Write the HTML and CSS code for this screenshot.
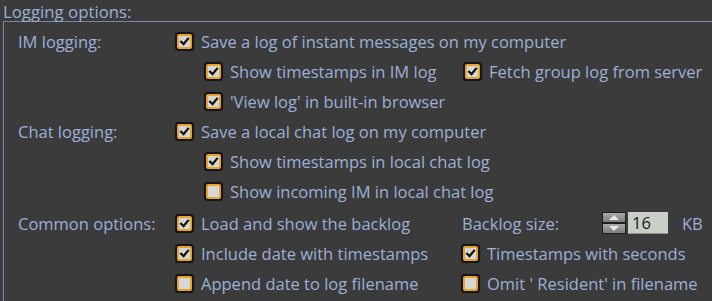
FILE: index.html
```html
<!DOCTYPE html>
<html>
<head>
<meta charset="utf-8">
<link rel="stylesheet" href="styles.css">
</head>
<body>
<div class="title">Logging options:</div>
<div class="box">
  <div class="row">
    <div class="lbl">IM logging:</div>
    <div class="opt"><span class="cb on"><svg viewBox="0 0 12 12"><path d="M2.3 6.2 L5 8.8 L9.8 3"/></svg></span>Save a log of instant messages on my computer</div>
  </div>
  <div class="row sub">
    <div class="opt w1"><span class="cb on"><svg viewBox="0 0 12 12"><path d="M2.3 6.2 L5 8.8 L9.8 3"/></svg></span>Show timestamps in IM log</div>
    <div class="opt"><span class="cb on"><svg viewBox="0 0 12 12"><path d="M2.3 6.2 L5 8.8 L9.8 3"/></svg></span>Fetch group log from server</div>
  </div>
  <div class="row sub">
    <div class="opt"><span class="cb on"><svg viewBox="0 0 12 12"><path d="M2.3 6.2 L5 8.8 L9.8 3"/></svg></span>'View log' in built-in browser</div>
  </div>
  <div class="row">
    <div class="lbl">Chat logging:</div>
    <div class="opt"><span class="cb on"><svg viewBox="0 0 12 12"><path d="M2.3 6.2 L5 8.8 L9.8 3"/></svg></span>Save a local chat log on my computer</div>
  </div>
  <div class="row sub">
    <div class="opt"><span class="cb on"><svg viewBox="0 0 12 12"><path d="M2.3 6.2 L5 8.8 L9.8 3"/></svg></span>Show timestamps in local chat log</div>
  </div>
  <div class="row sub">
    <div class="opt"><span class="cb"></span>Show incoming IM in local chat log</div>
  </div>
  <div class="row gap">
    <div class="lbl">Common options:</div>
    <div class="opt w2"><span class="cb on"><svg viewBox="0 0 12 12"><path d="M2.3 6.2 L5 8.8 L9.8 3"/></svg></span>Load and show the backlog</div>
    <div class="backlog">
      <span class="bl-label">Backlog size:</span>
      <span class="spin"><span class="btn up"></span><span class="btn down"></span></span>
      <span class="num">16</span>
      <span class="kb">KB</span>
    </div>
  </div>
  <div class="row ind">
    <div class="opt w2"><span class="cb on"><svg viewBox="0 0 12 12"><path d="M2.3 6.2 L5 8.8 L9.8 3"/></svg></span>Include date with timestamps</div>
    <div class="opt"><span class="cb on"><svg viewBox="0 0 12 12"><path d="M2.3 6.2 L5 8.8 L9.8 3"/></svg></span>Timestamps with seconds</div>
  </div>
  <div class="row ind">
    <div class="opt w2"><span class="cb"></span>Append date to log filename</div>
    <div class="opt"><span class="cb"></span>Omit ' Resident' in filename</div>
  </div>
</div>
</body>
</html>
```

FILE: styles.css
```css
html, body {
  margin: 0;
  padding: 0;
  background: #3b3b3b;
}
body {
  width: 712px;
  height: 301px;
  overflow: hidden;
  font-family: "Open Sans", "Noto Sans", sans-serif;
  font-size: 16.5px;
  color: #9cb0d8;
}
.title {
  height: 21px;
  line-height: 23px;
  padding-left: 3px;
  font-size: 16.8px;
  overflow: visible;
}
.box {
  box-sizing: border-box;
  margin-left: 3px;
  border-top: 1px solid #7788a6;
  border-left: 1px solid #7788a6;
  padding-top: 4px;
  padding-left: 14px;
  height: 280px;
}
.row {
  display: flex;
  align-items: center;
  height: 30px;
  white-space: nowrap;
}
.row.sub {
  padding-left: 187px;
}
.row.ind {
  padding-left: 158px;
}
.row.gap {
  margin-top: 2px;
}
.lbl {
  width: 158px;
  flex: none;
}
.opt {
  display: flex;
  align-items: center;
}
.w1 {
  width: 259px;
  flex: none;
}
.w2 {
  width: 286px;
  flex: none;
}
.cb {
  box-sizing: border-box;
  width: 15px;
  height: 15px;
  border: 2px solid #e9a32a;
  border-radius: 2px;
  background: #d6d6d4;
  box-shadow: 0 0 1px 1.5px #141414;
  margin-left: 1px;
  margin-right: 9px;
  display: flex;
  align-items: center;
  justify-content: center;
  flex: none;
}
.cb svg {
  width: 11px;
  height: 11px;
}
.cb path {
  fill: none;
  stroke: #111;
  stroke-width: 2.4;
  stroke-linecap: square;
}
.backlog {
  display: flex;
  align-items: center;
}
.bl-label {
  width: 140px;
}
.spin {
  display: flex;
  flex-direction: column;
  width: 24px;
  height: 22px;
  margin-right: 2px;
}
.btn {
  position: relative;
  flex: 1;
  background: linear-gradient(#a9a9a9, #7d7d7d);
  border: 1px solid #1e1e1e;
  box-sizing: border-box;
}
.btn::after {
  content: "";
  position: absolute;
  left: 6px;
  border-left: 5px solid transparent;
  border-right: 5px solid transparent;
}
.up::after {
  top: 2px;
  border-bottom: 5px solid #e8e8e8;
}
.down::after {
  top: 2px;
  border-top: 5px solid #e8e8e8;
}
.num {
  box-sizing: border-box;
  width: 40px;
  height: 22px;
  background: #c8d0c6;
  color: #1a1a1a;
  padding-left: 4px;
  line-height: 22px;
  border-bottom: 1px solid #8e968e;
}
.kb {
  margin-left: 14px;
}
```
